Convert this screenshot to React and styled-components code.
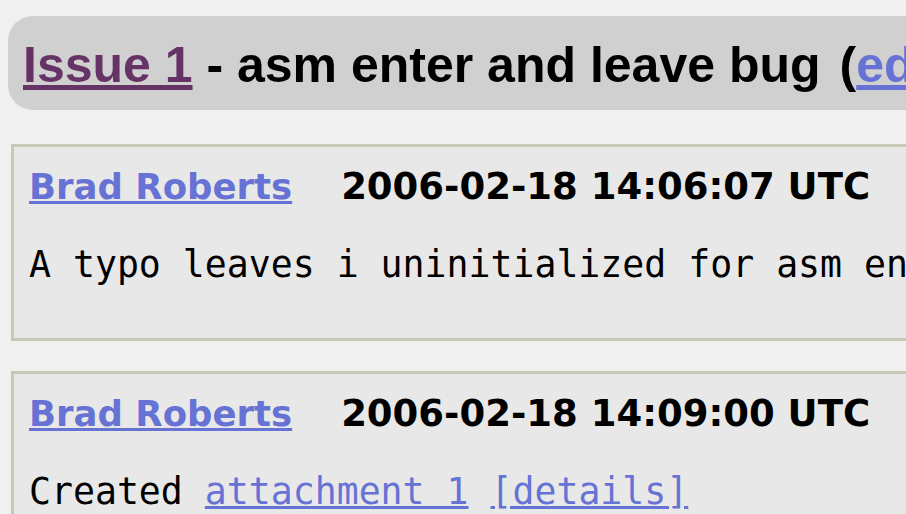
import styled, { createGlobalStyle } from "styled-components";

const GlobalStyle = createGlobalStyle`
    html, body {
        margin: 0;
        padding: 0;
        overflow: hidden;
        background-color: #f0f0f0;
    }
`;

const comments = [
    {
        id: 1,
        author: "Brad Roberts",
        time: "2006-02-18 14:06:07 UTC",
        text: "A typo leaves i uninitialized for asm enter and leave instructions.",
    },
    {
        id: 2,
        author: "Brad Roberts",
        time: "2006-02-18 14:09:00 UTC",
        attachment: true,
    },
];

function App() {
    return (
        <Page>
            <GlobalStyle />
            <Summary>
                <IssueLink href="#">Issue 1</IssueLink> - asm enter and leave bug
                <EditInfo>
                    (<EditLink href="#">edit</EditLink>)
                </EditInfo>
            </Summary>

            {comments.map((c) => (
                <Comment key={c.id}>
                    <CommentHead>
                        <Author href="#">{c.author}</Author>
                        <Time>{c.time}</Time>
                    </CommentHead>
                    <CommentText>
                        {c.attachment ? (
                            <>
                                Created <PlainLink href="#">attachment 1</PlainLink>{" "}
                                <PlainLink href="#">[details]</PlainLink>
                                {"\npatch"}
                            </>
                        ) : (
                            c.text
                        )}
                    </CommentText>
                </Comment>
            ))}
        </Page>
    );
}

export default App;

const Page = styled.div`
    width: 1600px;
    padding: 16px 0 0 8px;
`;

const Summary = styled.h1`
    margin: 0 0 34px 0;
    padding: 20px 15px 16px 15px;
    background-color: #d0d0d0;
    border-radius: 25px;
    font-family: "Liberation Sans", Arial, sans-serif;
    font-size: 50px;
    font-weight: bold;
    line-height: normal;
    color: #000;
    white-space: nowrap;
`;

const IssueLink = styled.a`
    color: #663366;
    text-decoration: underline;
`;

const EditInfo = styled.span`
    margin-left: 19px;
`;

const EditLink = styled.a`
    color: #6673d4;
    text-decoration: underline;
`;

const Comment = styled.div`
    margin: 0 0 30px 3px;
    padding: 19px 15px 15px 15px;
    background-color: #e8e8e8;
    border: 3px solid #c8c8b9;
`;

const CommentHead = styled.div`
    display: flex;
    align-items: baseline;
    font-family: "DejaVu Sans", Verdana, sans-serif;
    font-weight: bold;
    line-height: 42px;
    white-space: nowrap;
`;

const Author = styled.a`
    font-size: 35.5px;
    color: #6673d4;
    text-decoration: underline;
`;

const Time = styled.span`
    margin-left: 49px;
    font-size: 37px;
    color: #000;
`;

const CommentText = styled.pre`
    margin: 35px 0 37px 0;
    font-family: "DejaVu Sans Mono", monospace;
    font-size: 36.5px;
    line-height: normal;
    color: #000;
    white-space: pre;
`;

const PlainLink = styled.a`
    color: #6673d4;
    text-decoration: underline;
`;
